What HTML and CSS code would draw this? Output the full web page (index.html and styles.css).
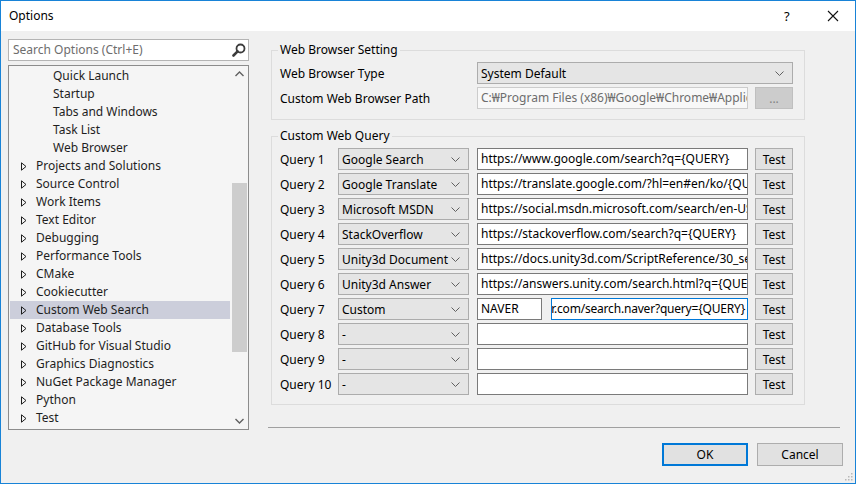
FILE: index.html
```html
<!DOCTYPE html>
<html>
<head>
<meta charset="utf-8">
<link rel="stylesheet" href="styles.css">
</head>
<body>
<div class="window">
  <div class="titlebar">
    <span class="title">Options</span>
    <span class="help">?</span>
    <svg class="close" width="12" height="12" viewBox="0 0 12 12"><path d="M1 1 L11 11 M11 1 L1 11" stroke="#111" stroke-width="1.1" fill="none"/></svg>
  </div>
  <div class="main">
    <div class="left">
      <div class="search">
        <span class="placeholder">Search Options (Ctrl+E)</span>
        <svg class="mag" width="14" height="14" viewBox="0 0 14 14"><circle cx="8.5" cy="5.5" r="4" stroke="#3c3c3c" stroke-width="1.8" fill="none"/><path d="M5.6 8.4 L1.5 12.5" stroke="#3c3c3c" stroke-width="2.6" stroke-linecap="round"/></svg>
      </div>
      <div class="tree">
        <div class="list">
          <div class="item child">Quick Launch</div>
          <div class="item child">Startup</div>
          <div class="item child">Tabs and Windows</div>
          <div class="item child">Task List</div>
          <div class="item child">Web Browser</div>
          <div class="item"><svg class="tri" width="6" height="9" viewBox="0 0 6 9"><path d="M0.5 0.8 L5 4.5 L0.5 8.2 Z" stroke="#1e1e1e" fill="none"/></svg>Projects and Solutions</div>
          <div class="item"><svg class="tri" width="6" height="9" viewBox="0 0 6 9"><path d="M0.5 0.8 L5 4.5 L0.5 8.2 Z" stroke="#1e1e1e" fill="none"/></svg>Source Control</div>
          <div class="item"><svg class="tri" width="6" height="9" viewBox="0 0 6 9"><path d="M0.5 0.8 L5 4.5 L0.5 8.2 Z" stroke="#1e1e1e" fill="none"/></svg>Work Items</div>
          <div class="item"><svg class="tri" width="6" height="9" viewBox="0 0 6 9"><path d="M0.5 0.8 L5 4.5 L0.5 8.2 Z" stroke="#1e1e1e" fill="none"/></svg>Text Editor</div>
          <div class="item"><svg class="tri" width="6" height="9" viewBox="0 0 6 9"><path d="M0.5 0.8 L5 4.5 L0.5 8.2 Z" stroke="#1e1e1e" fill="none"/></svg>Debugging</div>
          <div class="item"><svg class="tri" width="6" height="9" viewBox="0 0 6 9"><path d="M0.5 0.8 L5 4.5 L0.5 8.2 Z" stroke="#1e1e1e" fill="none"/></svg>Performance Tools</div>
          <div class="item"><svg class="tri" width="6" height="9" viewBox="0 0 6 9"><path d="M0.5 0.8 L5 4.5 L0.5 8.2 Z" stroke="#1e1e1e" fill="none"/></svg>CMake</div>
          <div class="item"><svg class="tri" width="6" height="9" viewBox="0 0 6 9"><path d="M0.5 0.8 L5 4.5 L0.5 8.2 Z" stroke="#1e1e1e" fill="none"/></svg>Cookiecutter</div>
          <div class="item selected"><svg class="tri" width="6" height="9" viewBox="0 0 6 9"><path d="M0.5 0.8 L5 4.5 L0.5 8.2 Z" stroke="#1e1e1e" fill="none"/></svg>Custom Web Search</div>
          <div class="item"><svg class="tri" width="6" height="9" viewBox="0 0 6 9"><path d="M0.5 0.8 L5 4.5 L0.5 8.2 Z" stroke="#1e1e1e" fill="none"/></svg>Database Tools</div>
          <div class="item"><svg class="tri" width="6" height="9" viewBox="0 0 6 9"><path d="M0.5 0.8 L5 4.5 L0.5 8.2 Z" stroke="#1e1e1e" fill="none"/></svg>GitHub for Visual Studio</div>
          <div class="item"><svg class="tri" width="6" height="9" viewBox="0 0 6 9"><path d="M0.5 0.8 L5 4.5 L0.5 8.2 Z" stroke="#1e1e1e" fill="none"/></svg>Graphics Diagnostics</div>
          <div class="item"><svg class="tri" width="6" height="9" viewBox="0 0 6 9"><path d="M0.5 0.8 L5 4.5 L0.5 8.2 Z" stroke="#1e1e1e" fill="none"/></svg>NuGet Package Manager</div>
          <div class="item"><svg class="tri" width="6" height="9" viewBox="0 0 6 9"><path d="M0.5 0.8 L5 4.5 L0.5 8.2 Z" stroke="#1e1e1e" fill="none"/></svg>Python</div>
          <div class="item"><svg class="tri" width="6" height="9" viewBox="0 0 6 9"><path d="M0.5 0.8 L5 4.5 L0.5 8.2 Z" stroke="#1e1e1e" fill="none"/></svg>Test</div>
        </div>
        <div class="scrollbar">
          <svg class="sarrow" width="17" height="17" viewBox="0 0 17 17"><path d="M4.5 10 L8.5 6 L12.5 10" stroke="#606060" stroke-width="1.4" fill="none"/></svg>
          <div class="track"><div class="thumb"></div></div>
          <svg class="sarrow" width="17" height="17" viewBox="0 0 17 17"><path d="M4.5 7 L8.5 11 L12.5 7" stroke="#606060" stroke-width="1.4" fill="none"/></svg>
        </div>
      </div>
    </div>
    <div class="right">
      <fieldset class="group g1">
        <legend>Web Browser Setting</legend>
        <div class="grid1">
          <span class="label">Web Browser Type</span>
          <div class="combo wide"><span>System Default</span><svg class="chev" width="9" height="5" viewBox="0 0 9 5"><path d="M0.5 0.5 L4.5 4.5 L8.5 0.5" stroke="#606060" fill="none"/></svg></div>
          <span class="label">Custom Web Browser Path</span>
          <div class="text disabled">C:₩Program Files (x86)₩Google₩Chrome₩Applic</div>
          <div class="btn disabled-btn">...</div>
        </div>
      </fieldset>
      <fieldset class="group g2">
        <legend>Custom Web Query</legend>
        <div class="grid2">
          <span class="label">Query 1</span>
          <div class="combo"><span>Google Search</span><svg class="chev" width="9" height="5" viewBox="0 0 9 5"><path d="M0.5 0.5 L4.5 4.5 L8.5 0.5" stroke="#606060" fill="none"/></svg></div>
          <div class="text">https://www.google.com/search?q={QUERY}</div>
          <div class="btn">Test</div>

          <span class="label">Query 2</span>
          <div class="combo"><span>Google Translate</span><svg class="chev" width="9" height="5" viewBox="0 0 9 5"><path d="M0.5 0.5 L4.5 4.5 L8.5 0.5" stroke="#606060" fill="none"/></svg></div>
          <div class="text">https://translate.google.com/?hl=en#en/ko/{QUERY}</div>
          <div class="btn">Test</div>

          <span class="label">Query 3</span>
          <div class="combo"><span>Microsoft MSDN</span><svg class="chev" width="9" height="5" viewBox="0 0 9 5"><path d="M0.5 0.5 L4.5 4.5 L8.5 0.5" stroke="#606060" fill="none"/></svg></div>
          <div class="text">https://social.msdn.microsoft.com/search/en-US?query={QUERY}</div>
          <div class="btn">Test</div>

          <span class="label">Query 4</span>
          <div class="combo"><span>StackOverflow</span><svg class="chev" width="9" height="5" viewBox="0 0 9 5"><path d="M0.5 0.5 L4.5 4.5 L8.5 0.5" stroke="#606060" fill="none"/></svg></div>
          <div class="text">https://stackoverflow.com/search?q={QUERY}</div>
          <div class="btn">Test</div>

          <span class="label">Query 5</span>
          <div class="combo"><span>Unity3d Document</span><svg class="chev" width="9" height="5" viewBox="0 0 9 5"><path d="M0.5 0.5 L4.5 4.5 L8.5 0.5" stroke="#606060" fill="none"/></svg></div>
          <div class="text">https://docs.unity3d.com/ScriptReference/30_search.html?q={QUERY}</div>
          <div class="btn">Test</div>

          <span class="label">Query 6</span>
          <div class="combo"><span>Unity3d Answer</span><svg class="chev" width="9" height="5" viewBox="0 0 9 5"><path d="M0.5 0.5 L4.5 4.5 L8.5 0.5" stroke="#606060" fill="none"/></svg></div>
          <div class="text">https://answers.unity.com/search.html?q={QUERY}</div>
          <div class="btn">Test</div>

          <span class="label">Query 7</span>
          <div class="combo"><span>Custom</span><svg class="chev" width="9" height="5" viewBox="0 0 9 5"><path d="M0.5 0.5 L4.5 4.5 L8.5 0.5" stroke="#606060" fill="none"/></svg></div>
          <div class="pair">
            <div class="text name">NAVER</div>
            <div class="text focused"><span>r.com/search.naver?query={QUERY}</span></div>
          </div>
          <div class="btn">Test</div>

          <span class="label">Query 8</span>
          <div class="combo"><span>-</span><svg class="chev" width="9" height="5" viewBox="0 0 9 5"><path d="M0.5 0.5 L4.5 4.5 L8.5 0.5" stroke="#606060" fill="none"/></svg></div>
          <div class="text"></div>
          <div class="btn">Test</div>

          <span class="label">Query 9</span>
          <div class="combo"><span>-</span><svg class="chev" width="9" height="5" viewBox="0 0 9 5"><path d="M0.5 0.5 L4.5 4.5 L8.5 0.5" stroke="#606060" fill="none"/></svg></div>
          <div class="text"></div>
          <div class="btn">Test</div>

          <span class="label">Query 10</span>
          <div class="combo"><span>-</span><svg class="chev" width="9" height="5" viewBox="0 0 9 5"><path d="M0.5 0.5 L4.5 4.5 L8.5 0.5" stroke="#606060" fill="none"/></svg></div>
          <div class="text"></div>
          <div class="btn">Test</div>
        </div>
      </fieldset>
      <div class="sep"></div>
      <div class="buttons">
        <div class="dbtn default">OK</div>
        <div class="dbtn">Cancel</div>
      </div>
    </div>
  </div>
  <svg class="grip" width="10" height="10" viewBox="0 0 10 10"><g fill="#b8b8b8"><rect x="8" y="2" width="1.5" height="1.5"/><rect x="5" y="5" width="1.5" height="1.5"/><rect x="8" y="5" width="1.5" height="1.5"/><rect x="2" y="8" width="1.5" height="1.5"/><rect x="5" y="8" width="1.5" height="1.5"/><rect x="8" y="8" width="1.5" height="1.5"/></g></svg>
</div>
</body>
</html>
```

FILE: styles.css
```css
* { box-sizing: border-box; }
html, body { margin: 0; padding: 0; }
body {
  width: 856px;
  height: 484px;
  overflow: hidden;
  font-family: "Noto Sans", "Open Sans", sans-serif;
  font-size: 12px;
  color: #000;
}
.window {
  position: relative;
  width: 856px;
  height: 484px;
  border: 1px solid #1883d7;
  background: #f0f0f0;
  display: flex;
  flex-direction: column;
}
.titlebar {
  height: 30px;
  background: #fff;
  display: flex;
  align-items: center;
  padding-left: 8px;
  flex-shrink: 0;
}
.title { flex: 1; font-size: 12px; line-height: 16px; }
.help { width: 12px; margin-right: 31px; font-size: 13px; line-height: 16px; }
.close { margin-right: 16px; }

.main {
  display: flex;
  padding: 8px 0 0 7px;
  gap: 19px;
}
.left { width: 241px; display: flex; flex-direction: column; gap: 4px; }
.search {
  height: 22px;
  border: 1px solid #b4b4b4;
  background: #fff;
  display: flex;
  align-items: center;
  padding: 0 2px 0 4px;
}
.placeholder { flex: 1; color: #6d6d6d; line-height: 16px; }
.mag { margin-top: -1px; }

.tree {
  height: 365px;
  border: 1px solid #8c8c8c;
  background: #f5f5f5;
  display: flex;
}
.list { flex: 1; padding: 1px 0 0 1px; }
.item {
  height: 18px;
  line-height: 18px;
  padding-left: 11px;
  display: flex;
  align-items: center;
  color: #1e1e1e;
  white-space: nowrap;
}
.item.child { padding-left: 43px; }
.tri { margin-right: 9px; }
.item.selected { background: #cccedb; }
.scrollbar {
  width: 17px;
  margin-left: 1px;
  display: flex;
  flex-direction: column;
  background: #f5f5f5;
}
.track { flex: 1; padding: 100px 1px 0 1px; }
.thumb { height: 169px; background: #cdcdcd; }

.right { width: 575px; margin-top: 3px; display: flex; flex-direction: column; }
.group {
  margin: 0 0 0 3px;
  width: 534px;
  border: 1px solid #dcdcdc;
  padding: 4px 11px 9px 8px;
  min-width: 0;
}
.group legend { padding: 0 2px; margin-left: -2px; line-height: 16px; }
.g1 { padding-bottom: 10px; }
.g2 { margin-top: 8px; padding-top: 4px; }

.grid1 {
  display: grid;
  grid-template-columns: 197px 278px 38px;
  grid-auto-rows: 22px;
  row-gap: 3px;
}
.grid1 .combo.wide { grid-column: 2 / 4; }
.grid1 .text { width: 271px; }

.grid2 {
  display: grid;
  grid-template-columns: 58px 139px 278px 38px;
  grid-auto-rows: 22px;
  row-gap: 3px;
}
.grid2 .combo { width: 131px; }
.grid2 .text, .grid2 .pair { width: 271px; }

.label { display: flex; align-items: center; padding-top: 2px; line-height: 16px; white-space: nowrap; }
.combo {
  border: 1px solid #acacac;
  background: #e5e5e5;
  display: flex;
  align-items: center;
  padding: 2px 8px 0 3px;
  line-height: 16px;
}
.combo span { flex: 1; white-space: nowrap; }
.chev { margin-top: -2px; flex-shrink: 0; }
.text {
  border: 1px solid #7a7a7a;
  background: #fff;
  padding: 0 3px;
  line-height: 19px;
  white-space: nowrap;
  overflow: hidden;
}
.text.disabled { border-color: #cccccc; background: #f8f8f8; color: #6d6d6d; }
.pair { display: flex; gap: 9px; }
.pair .name { width: 65px; flex-shrink: 0; }
.pair .focused {
  width: 197px;
  flex-shrink: 0;
  border-color: #0078d7;
  display: flex;
  justify-content: flex-end;
  padding: 0 2px 0 3px;
}
.pair .focused span { flex-shrink: 0; letter-spacing: -0.2px; }
.btn {
  border: 1px solid #adadad;
  background: #e1e1e1;
  display: flex;
  align-items: center;
  justify-content: center;
  padding-top: 1px;
  line-height: 16px;
}
.btn.disabled-btn { background: #cccccc; border-color: #bfbfbf; color: #838383; }

.sep { margin-top: 22px; height: 1px; background: #a0a0a0; width: 572px; }
.buttons { display: flex; justify-content: flex-end; gap: 9px; margin-top: 15px; }
.dbtn {
  width: 86px;
  height: 23px;
  border: 1px solid #adadad;
  background: #e1e1e1;
  display: flex;
  align-items: center;
  justify-content: center;
  line-height: 16px;
}
.dbtn.default { border: 2px solid #0078d7; }
.grip { position: absolute; right: 2px; bottom: 2px; }
```
